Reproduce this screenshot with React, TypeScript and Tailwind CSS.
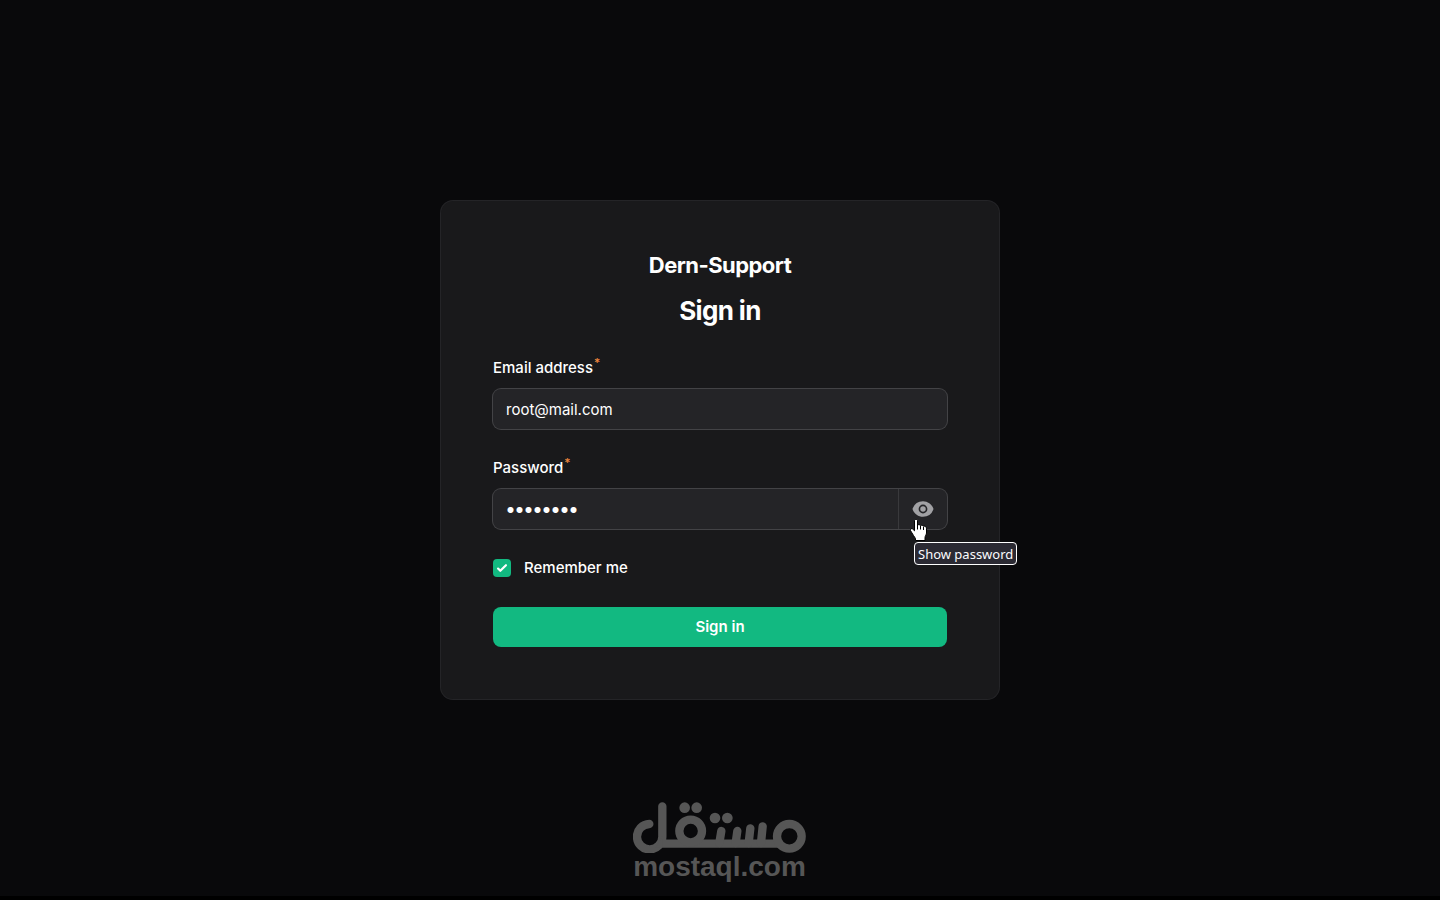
import React, { useState } from 'react';

const font = "font-['Inter',sans-serif]";

const labelClass = 'text-[15px] leading-6 font-medium text-white';
const fieldClass =
    'h-10 rounded-lg bg-[#242427] ring-1 ring-[#434346] focus-within:ring-2 focus-within:ring-emerald-500';
const inputClass =
    'w-full min-w-0 h-full bg-transparent px-[13px] leading-6 text-white outline-none';

function Required() {
    return <sup className="ml-px text-[12px] font-medium text-[#f0883e]">*</sup>;
}

function EyeIcon() {
    return (
        <svg viewBox="0 0 20 20" fill="currentColor" className="w-[22px] h-[22px]" aria-hidden="true">
            <path d="M10 12.5a2.5 2.5 0 1 0 0-5 2.5 2.5 0 0 0 0 5Z" />
            <path
                fillRule="evenodd"
                clipRule="evenodd"
                d="M.664 10.59a1.651 1.651 0 0 1 0-1.186A10.004 10.004 0 0 1 10 3c4.257 0 7.893 2.66 9.336 6.41.147.381.146.804 0 1.186A10.004 10.004 0 0 1 10 17c-4.257 0-7.893-2.66-9.336-6.41ZM14 10a4 4 0 1 1-8 0 4 4 0 0 1 8 0Z"
            />
        </svg>
    );
}

function HandCursor() {
    return (
        <svg viewBox="0 0 17 22" className="w-[17px] h-[22px]" aria-hidden="true">
            <path
                d="M5.5 .5h1c.6 0 1 .5 1 1V6c.5-.5 2.5-.5 3 .5.6-.4 2.3-.3 2.7.7 1-.4 3.3.2 3.3 2V14c0 1.500-1.500 3-1.500 4.500v3H5.500v-2C4 17.500 3 15.500 1.500 13.200L.5 11.500c-.4-1.500 1-2.300 2.200-1.500L4.500 11.800V1.500c0-.5.400-1 1-1Z"
                fill="white"
                stroke="black"
                strokeLinejoin="round"
            />
            <path d="M7.500 6v4.500M10.500 7v3.500M13.500 8v3" stroke="black" fill="none" />
        </svg>
    );
}

function MostaqlLogo() {
    return (
        <svg viewBox="39 36 519 153" className="w-[173px] h-[51px]" role="img" aria-label="مستقل">
            <g fill="none" stroke="currentColor" strokeWidth="25" strokeLinecap="round">
                <path d="M127 49v90a38 38 0 1 1-39-37" />
                <path d="M127 161h355" strokeLinecap="butt" />
                <circle cx="508" cy="139" r="37" />
                <circle cx="212" cy="123" r="34" />
                <path d="M428 109l-5 50M391 115l-5 44M352 123l-5 36M304 123l-6 36" />
            </g>
            <path d="M127 139v34h-20z" fill="currentColor" />
            <g fill="currentColor">
                <circle cx="194" cy="53" r="16" />
                <circle cx="230" cy="53" r="16" />
                <circle cx="285" cy="84" r="16" />
                <circle cx="322" cy="84" r="16" />
            </g>
        </svg>
    );
}

export default function App() {
    const [email, setEmail] = useState('root@mail.com');
    const [password, setPassword] = useState('password');
    const [remember, setRemember] = useState(true);
    const [visible, setVisible] = useState(false);

    return (
        <div className={`grid min-h-screen grid-rows-[1fr_auto_1fr] bg-[#09090b] text-white ${font}`}>
            <main className="row-start-2 w-full max-w-[558px] mx-auto rounded-xl bg-[#19191b] ring-1 ring-[#242427] p-13">
                <header className="flex flex-col items-center text-center">
                    <div className="text-[22px] leading-6 font-bold tracking-tight">Dern-Support</div>
                    <h1 className="mt-[18px] text-[26px] leading-8 font-bold tracking-tight">Sign in</h1>
                </header>

                <form className="mt-[29px] flex flex-col gap-[27px]" onSubmit={(e) => e.preventDefault()}>
                    <div className="flex flex-col gap-[9px]">
                        <label htmlFor="email" className={labelClass}>
                            Email address<Required />
                        </label>
                        <div className={fieldClass}>
                            <input
                                id="email"
                                type="email"
                                value={email}
                                onChange={(e) => setEmail(e.target.value)}
                                className={`text-[15px] ${inputClass}`}
                            />
                        </div>
                    </div>

                    <div className="flex flex-col gap-[9px]">
                        <label htmlFor="password" className={labelClass}>
                            Password<Required />
                        </label>
                        <div className={`relative flex ${fieldClass}`}>
                            <input
                                id="password"
                                type={visible ? 'text' : 'password'}
                                value={password}
                                onChange={(e) => setPassword(e.target.value)}
                                className={`${visible ? 'text-[15px]' : 'text-[19px] font-bold'} ${inputClass}`}
                            />
                            <button
                                type="button"
                                aria-label="Show password"
                                onClick={() => setVisible(!visible)}
                                className="flex w-[49px] shrink-0 cursor-pointer items-center justify-center border-l border-[#39393c] text-[#a1a1a4]"
                            >
                                <EyeIcon />
                            </button>
                            <div className="pointer-events-none absolute top-[30px] right-5">
                                <HandCursor />
                            </div>
                            <div
                                role="tooltip"
                                className="pointer-events-none absolute top-[53px] left-[421px] h-[23px] rounded-sm border border-white bg-[#2b2a33] px-[3px] font-['Noto_Sans',sans-serif] text-[13px] leading-[22px] whitespace-nowrap text-[#fbfbfe]"
                            >
                                Show password
                            </div>
                        </div>
                    </div>

                    <label className="flex items-center gap-[13px] text-[15px] leading-6 font-medium">
                        <span className="grid size-[18px] place-items-center">
                            <input
                                type="checkbox"
                                checked={remember}
                                onChange={(e) => setRemember(e.target.checked)}
                                className="peer col-start-1 row-start-1 size-[18px] appearance-none rounded bg-[#242427] checked:bg-[#12b981]"
                            />
                            <svg
                                viewBox="0 0 16 16"
                                fill="white"
                                className="pointer-events-none invisible col-start-1 row-start-1 size-[18px] peer-checked:visible"
                                aria-hidden="true"
                            >
                                <path d="M12.207 4.793a1 1 0 0 1 0 1.414l-5 5a1 1 0 0 1-1.414 0l-2-2a1 1 0 0 1 1.414-1.414L6.500 9.086l4.293-4.293a1 1 0 0 1 1.414 0Z" />
                            </svg>
                        </span>
                        Remember me
                    </label>

                    <button
                        type="submit"
                        className="h-10 cursor-pointer rounded-lg bg-[#12b981] text-[15px] leading-6 font-semibold text-white"
                    >
                        Sign in
                    </button>
                </form>
            </main>

            <footer className="row-start-3 flex flex-col items-center self-end border-b-4 border-black pr-px pb-[15px] text-[#565656]">
                <MostaqlLogo />
                <span className="font-['Liberation_Sans',sans-serif] text-[28px] leading-7 font-bold">mostaql.com</span>
            </footer>
        </div>
    );
}
